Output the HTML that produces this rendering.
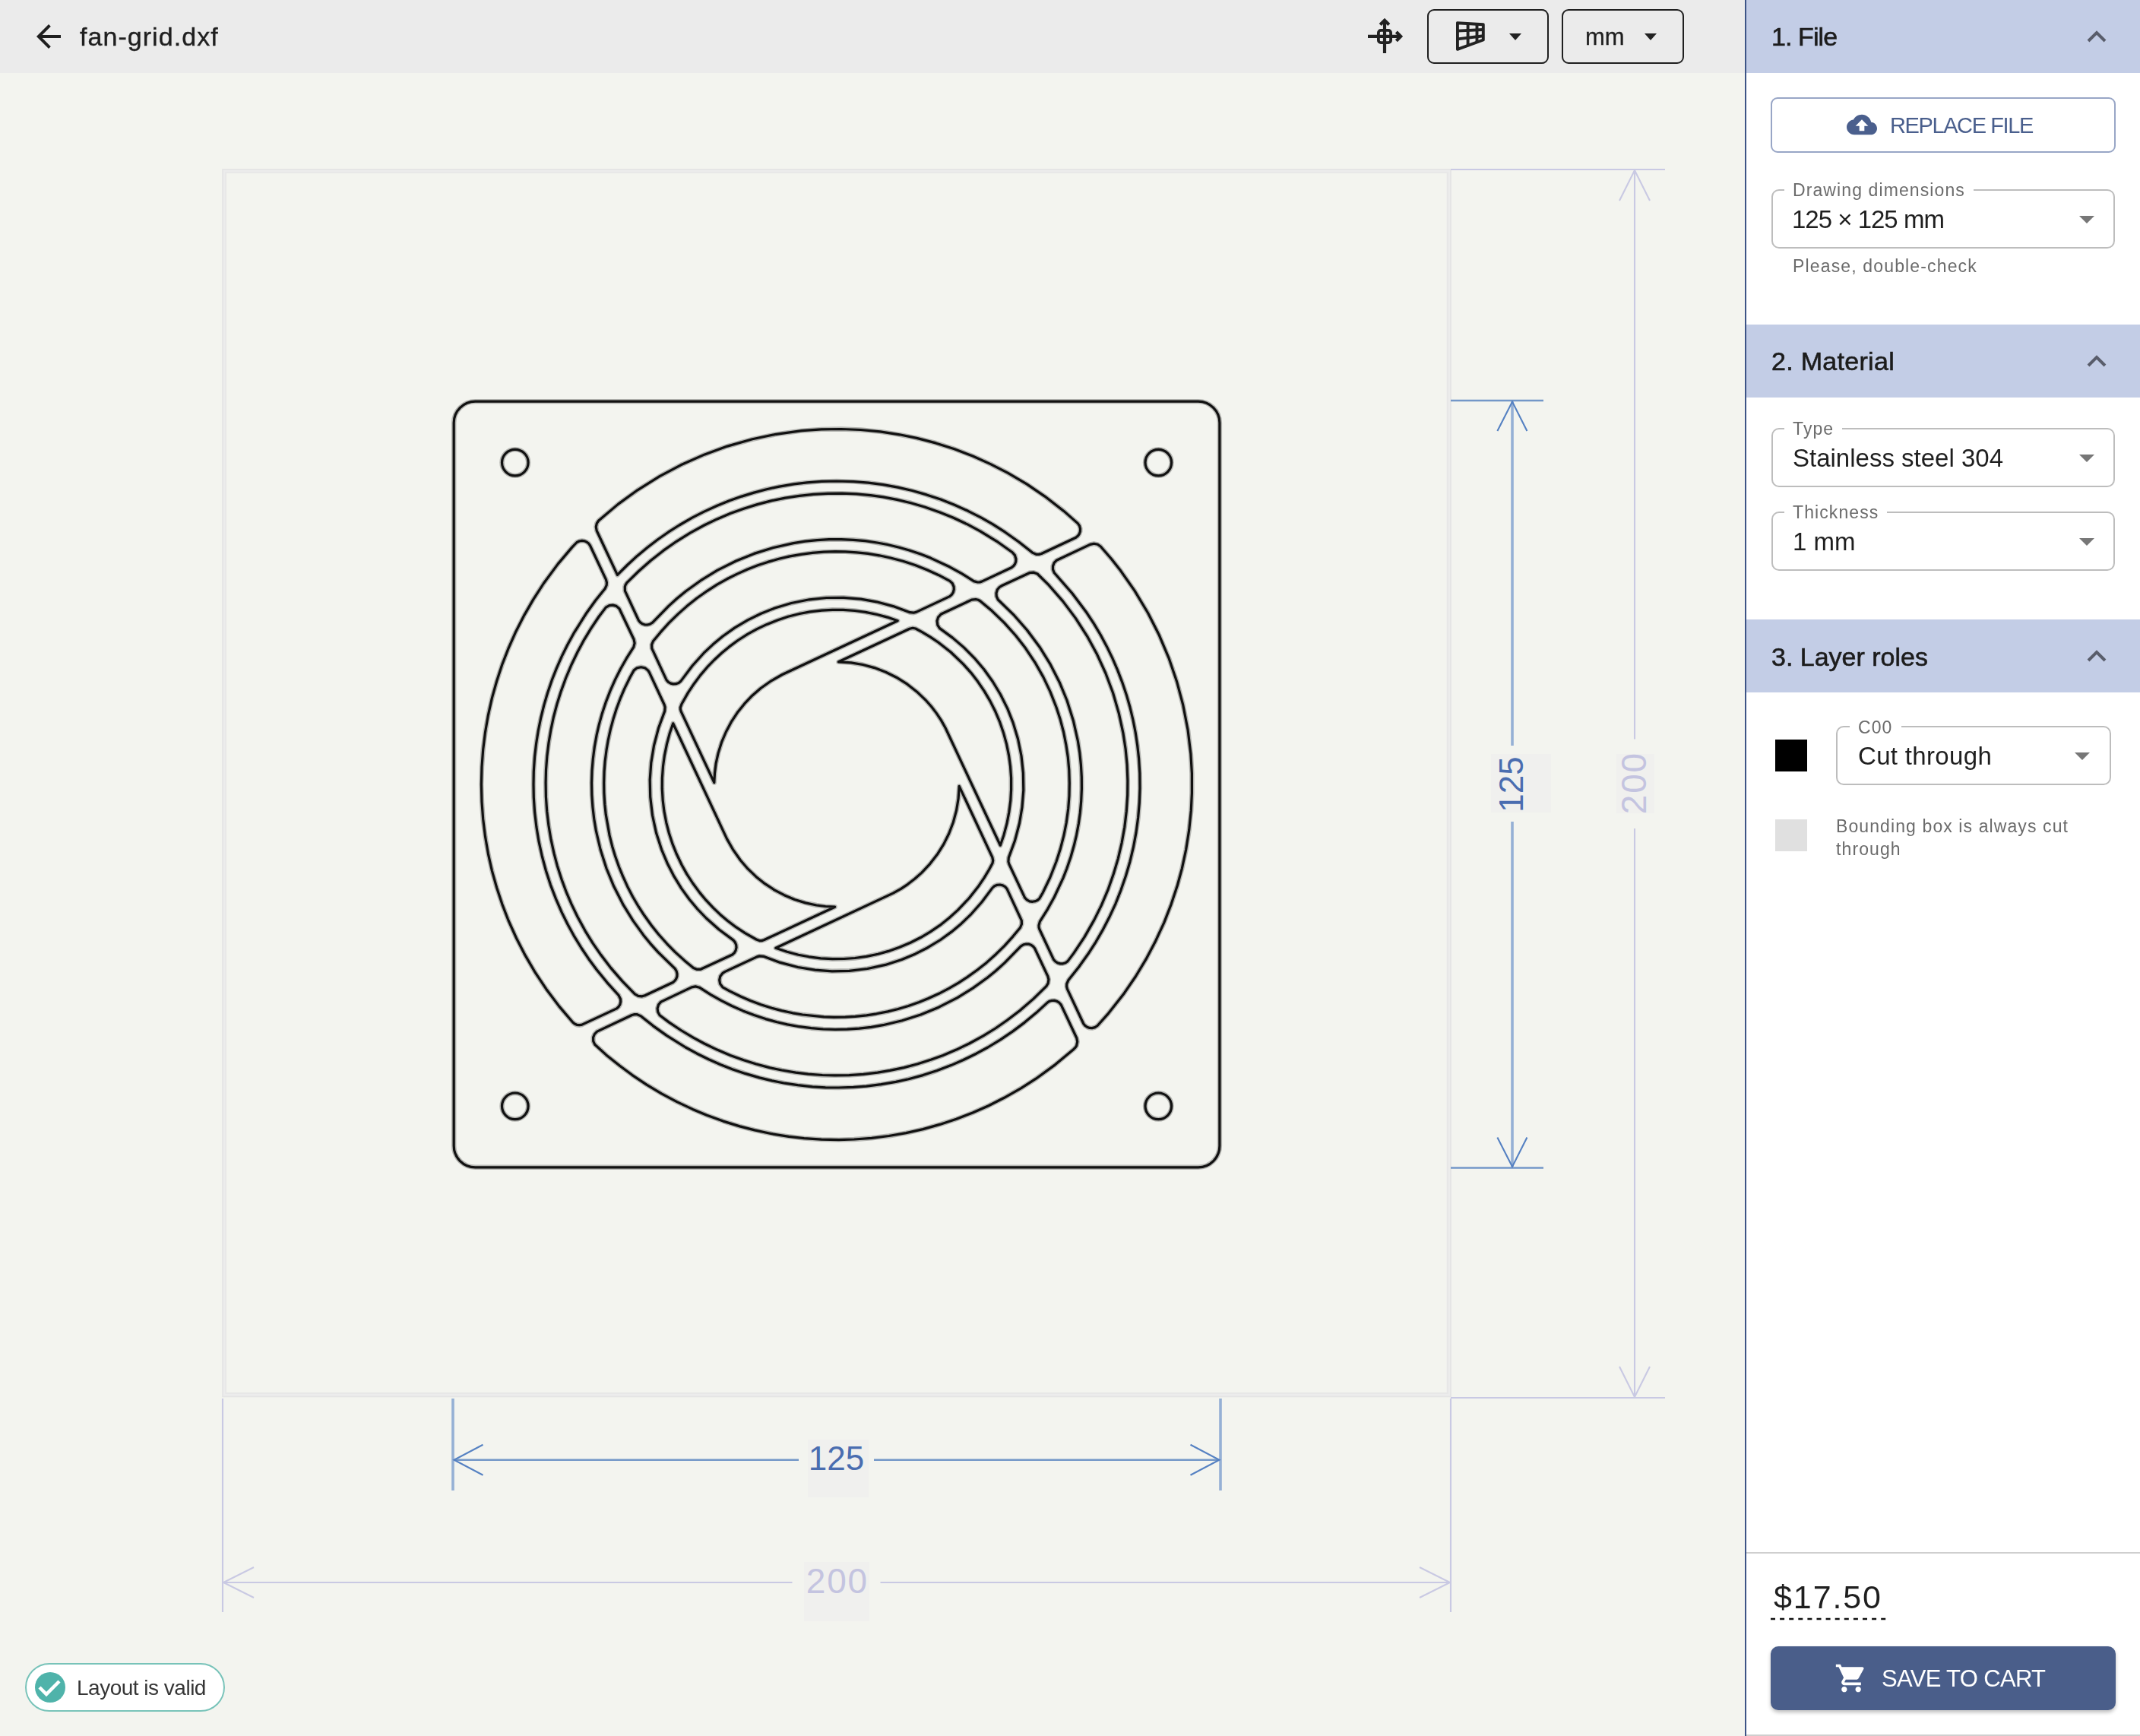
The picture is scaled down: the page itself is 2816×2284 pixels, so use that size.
<!DOCTYPE html>
<html><head><meta charset="utf-8">
<style>
html,body{margin:0;padding:0;width:2816px;height:2284px;overflow:hidden;background:#f3f4ef;font-family:"Liberation Sans",sans-serif;-webkit-font-smoothing:antialiased;}
.t,.val,.lbl,.hdr{will-change:transform;}
.abs{position:absolute;}
#topbar{left:0;top:0;width:2296px;height:96px;background:#ebebeb;}
#side{left:2298px;top:0;width:518px;height:2284px;background:#fff;}
#sideline{left:2296px;top:0;width:2px;height:2284px;background:#3d5486;}
.t{position:absolute;white-space:nowrap;line-height:1;}
.band{position:absolute;left:2298px;width:518px;height:96px;background:#c3cde6;}
.hdr{position:absolute;left:2331px;font-size:34px;color:#1c1c1c;-webkit-text-stroke:0.6px #1c1c1c;}
.chev{position:absolute;left:2744px;}
.field{position:absolute;border:2px solid #bdbdbd;border-radius:10px;box-sizing:border-box;}
.lbl{position:absolute;background:#fff;padding:0 11px;font-size:23px;letter-spacing:1.1px;color:#6b6b6b;line-height:1;}
.val{position:absolute;font-size:33px;color:#1f1f1f;line-height:1;}
.tri{position:absolute;width:0;height:0;border-left:10px solid transparent;border-right:10px solid transparent;border-top:10px solid #777;}
</style></head><body>
<div id="topbar" class="abs"></div>
<svg class="abs" style="left:0;top:0" width="2296" height="2284" viewBox="0 0 2296 2284">
  <!-- 200 box -->
  <rect x="295" y="225" width="1611.5" height="1610" fill="none" stroke="#ececec" stroke-width="6"/>
  <rect x="293" y="223" width="1616" height="1614.5" fill="none" stroke="#e4e4e4" stroke-width="1.6"/>
  <rect x="297" y="227" width="1608" height="1606" fill="none" stroke="#e6e6e6" stroke-width="1.6"/>
  <!-- fan drawing -->
  <defs><g id="fan">
    <rect x="597.2" y="528.1" width="1007.7" height="1007.7" rx="28.2" ry="28.2"/>
    <circle cx="677.8" cy="608.6" r="17.3"/>
    <circle cx="1524.3" cy="608.6" r="17.3"/>
    <circle cx="677.8" cy="1455.3" r="17.3"/>
    <circle cx="1524.3" cy="1455.3" r="17.3"/>
    <path d="M782.7 1374.2L780.7 1369.9L780.6 1364.8L782.4 1360.5L785.7 1357.1L831.6 1335.5L835 1334.6L838.5 1334.7L843.5 1336.9L859.3 1349.6L877.2 1362.4L902.2 1378L917.2 1386.2L932.6 1393.8L948.3 1400.7L964.2 1406.9L980.5 1412.4L999.3 1417.9L1015.9 1421.9L1032.7 1425.2L1049.7 1427.7L1069.2 1429.8L1086.3 1430.8L1103.4 1431L1123 1430.4L1140.1 1429.1L1159.5 1426.7L1178.8 1423.4L1195.5 1419.7L1214.5 1414.6L1233.1 1408.6L1251.4 1401.6L1267.1 1394.8L1284.7 1386.2L1299.8 1378L1316.5 1367.8L1332.7 1356.9L1348.4 1345.1L1363.5 1332.6L1378.5 1318.9L1381.2 1317.2L1383.9 1316.5L1387.4 1316.4L1390.8 1317.3L1393.8 1319.2L1396.2 1321.9L1416.8 1365.8L1417.7 1370.5L1416.6 1375.8L1415.1 1378.1L1412.8 1380.4L1388.7 1400.6L1363.2 1419.2L1343.8 1431.6L1321.4 1444.3L1300.9 1454.7L1279.9 1464L1258.5 1472.3L1236.7 1479.4L1214.6 1485.6L1192.3 1490.6L1169.6 1494.5L1146.9 1497.3L1124 1499L1103.8 1499.6L1080.9 1499.1L1058.1 1497.6L1038 1495.3L1015.5 1491.7L993 1486.9L973.5 1481.9L951.6 1475.1L930.1 1467.2L911.5 1459.4L890.7 1449.6L870.5 1438.8L850.9 1427.1L831.8 1414.3L815.6 1402.3L797.7 1387.9ZM1074.4 1191L1086.2 1192.5L1098.6 1193.2L1005.1 1236.8L1002.4 1237.6L999.9 1237.7L995.2 1236L980.4 1227.6L968.7 1219.9L957.5 1211.4L947.7 1203.2L938.5 1194.4L928.9 1184.2L920.7 1174.4L911.6 1162L903.9 1150.1L897 1137.8L890.4 1123.8L885.1 1110.7L880.3 1096L876.8 1082.3L873.9 1067.1L872.2 1053.1L871.3 1037.7L871.4 1023.5L872.5 1008.1L874.4 994.1L877.5 978.9L881.1 965.3L885.7 951.8L956.5 1103.6L964.8 1118.2L974.5 1132L984.2 1143.2L994.9 1153.4L1006.5 1162.7L1018.9 1170.8L1032 1177.7L1045.7 1183.5L1059.9 1187.9ZM834.2 881.9L838.3 878.8L843.6 877.7L848.6 878.8L852.7 882L854.4 884.6L874.1 927L875.1 930.4L874.7 935.6L866.6 957.7L860.5 981L856.8 1003.4L855.2 1025.9L855.7 1048.5L858.5 1072.5L863.6 1096.1L870.5 1117.6L878.1 1135.7L886.3 1151.8L896.5 1168.6L907.1 1183.2L917.8 1196L929.3 1208L946.2 1223L964.9 1236.9L967.2 1239.6L968.7 1243.2L969 1246.7L968.1 1250.5L966.3 1253.6L963.7 1256L921.9 1275.3L916.8 1275.3L912.5 1273.5L900.9 1263.9L888.4 1252.6L877.8 1241.8L866.6 1229.3L857.2 1217.5L847.4 1203.8L840.2 1192.7L832.6 1179.7L825.7 1166.4L819.5 1152.7L814.5 1140.5L809.5 1126.3L805.7 1113.7L802.1 1099.1L797.2 1071.4L795.8 1058.2L794.9 1043.3L794.7 1030.1L795.1 1015.1L796.1 1001.9L798 987.1L800.2 974L803.4 959.4L807.3 944.9L811.3 932.3L816.5 918.3L821.7 906.1L829.1 891ZM797.3 799.1L801.8 796.6L806.4 796.1L811 797.4L814.9 800.7L834.1 841.2L835.1 846.2L833.8 851.3L824.4 866.2L816.6 880L809.5 894.1L803.1 908.6L797.4 923.3L792.4 938.4L788.2 953.6L785.1 967.1L782.3 982.7L780.3 998.4L779 1014.2L778.5 1030L778.8 1045.8L779.9 1061.6L781.7 1077.3L784.3 1092.9L790.2 1118L798 1142.5L807.8 1166.3L820.4 1190.9L832.9 1211.1L846.8 1230.4L855.5 1241.1L866.1 1252.9L888.2 1274.4L890.2 1277.8L891 1281.3L890.9 1284.4L889.8 1287.8L887.9 1290.4L885.5 1292.5L848.6 1309.8L844.4 1310.9L839.8 1310.3L835.4 1307.8L818.9 1290.9L803.5 1273.1L790.7 1256.3L780 1240.8L770.1 1224.8L760 1206.3L751.9 1189.4L745.4 1174.2L738.9 1156.6L733.2 1138.7L729 1122.7L725 1104.4L721.9 1085.8L719.7 1067.2L718.4 1048.4L718.1 1029.7L718.5 1013.2L719.9 994.5L721.9 978.1L725 959.6L728.4 943.5L733.2 925.4L738.2 909.6L744.6 892L751.9 874.7L760 857.8L767.8 843.2L777.5 827.1L787.9 811.5ZM765.3 1348.4L762.2 1348.7L759 1348.3L756.2 1347L753.7 1345L735.9 1324.1L718.7 1301.2L704.4 1279.7L691.4 1257.4L679.6 1234.5L669 1211L660.8 1189.6L653.6 1167.8L647.4 1145.6L642.4 1123.3L638.5 1100.6L635.7 1077.9L634 1055L633.4 1032L634 1009L635.7 986.1L638.5 963.4L642.4 940.8L647.4 918.4L653.6 896.3L660.7 874.5L669 853.1L678.3 832.1L690 809.1L701.5 789.1L715.4 767.5L734.1 742.1L752.7 720.1L759.1 713.5L762.3 712L765.8 711.4L769.3 711.9L772.2 713.2L774.6 715.1L776.5 717.7L797.5 762.6L798.4 766.4L798.2 769.9L796.1 774.5L783.4 790.3L772 806.2L755 833.2L746.8 848.2L739.2 863.6L732.3 879.3L726.1 895.2L720.6 911.5L715.8 927.9L711.7 944.5L708.3 961.3L705.6 978.3L703.6 995.3L702.3 1014.8L702 1032L702.3 1049.1L703.6 1068.6L705.9 1088.1L709.1 1107.4L713.3 1126.5L718.4 1145.5L724.4 1164.1L731.4 1182.4L739.2 1200.4L746.8 1215.7L755 1230.8L765.2 1247.5L774.7 1261.7L784.9 1275.5L798.8 1292.6L814.1 1309.5L816.5 1314.5L816.7 1318L815.9 1321.5L814.1 1324.5L811.5 1326.9ZM942.1 1004.4L940.5 1017.2L939.8 1029.6L896.2 936.1L895.4 933.4L895.3 930.9L897 926.2L905.4 911.4L913.2 899.7L921.6 888.4L930.7 877.7L939.6 868.5L949.8 859L959.6 850.9L971 842.5L984.1 834.2L996.5 827.4L1009.2 821.4L1023.6 815.7L1037 811.3L1052 807.5L1065.9 804.9L1081.3 803.1L1095.4 802.3L1109.5 802.4L1124.9 803.5L1138.9 805.4L1154.1 808.5L1167.7 812.1L1181.2 816.7L1029.4 887.5L1014.8 895.8L1001 905.5L989.8 915.2L979.6 925.9L970.3 937.5L962.2 949.9L955.3 963L949.5 976.7L945.1 990.9ZM857.8 853.2L857.6 848.2L859.5 843.5L869.1 831.9L880.4 819.4L892.5 807.6L903.8 797.6L917 787L930.8 777.3L943.5 769.2L956.6 761.8L970 755.1L983.7 749L997.8 743.6L1010.3 739.4L1024.8 735.3L1039.4 731.9L1054.2 729.3L1069.1 727.3L1084.1 726.1L1099.1 725.7L1112.3 725.9L1127.3 726.8L1142.2 728.4L1157 730.8L1171.8 734L1188.2 738.3L1204.2 743.6L1219.9 749.7L1235.3 756.7L1249.8 764.3L1253.2 767.5L1255.1 771.9L1255.3 775.4L1254.3 779.3L1252.4 782.3L1249.8 784.6L1206 805.1L1202.2 806.2L1197.4 805.7L1175.3 797.6L1153.4 791.8L1132.6 788.2L1110.1 786.3L1087.5 786.5L1065 788.8L1041.3 793.5L1019.6 800L1001.4 807.2L983.8 815.9L966.9 825.9L950.9 837.2L938.2 847.8L926.1 859.2L911 876L896.1 895.9L893.1 898.4L889.4 899.7L885.9 899.9L882.5 899.1L879.4 897.3L877 894.7ZM822.4 777.4L822.3 771.9L823.2 769.3L824.9 766.7L840.4 751.5L856.3 737.5L872.9 724.4L890.2 712.3L908.2 701.1L926.7 691L943.6 682.9L961 675.6L978.6 669.2L996.6 663.6L1014.8 658.9L1033.2 655.1L1051.8 652.3L1070.5 650.3L1089.2 649.3L1108 649.1L1126.8 649.9L1145.5 651.7L1161.9 653.9L1180.3 657.4L1198.6 661.7L1216.7 667L1236.6 673.9L1254.1 681L1273.1 689.9L1289.8 698.8L1311.8 712.3L1332.2 726.7L1335.5 730.6L1336.9 735.5L1336.7 739L1335.6 742L1333.8 744.5L1331 746.8L1291.8 765.1L1289.2 765.9L1286.4 766L1281.4 764.6L1265.1 754.4L1249.5 745.8L1224.4 734.1L1211.5 729.1L1196.5 724L1183.2 720.2L1167.8 716.5L1154.2 714L1138.5 711.7L1122.8 710.3L1107 709.6L1091.1 709.7L1075.3 710.6L1059.6 712.2L1044 714.6L1016.9 720.7L992.4 728.4L968.6 738L943.8 750.4L923.5 762.8L902.6 777.8L890.4 787.8L880.1 797.1L858.6 819.2L855.2 821.2L851.7 822L848.2 821.8L845.2 820.8L842.6 818.9L840.5 816.5ZM868.1 1335.7L865.6 1331.2L865.1 1326.6L866.6 1321.7L869.7 1318.1L910.2 1298.9L915.2 1297.9L920.3 1299.2L935.2 1308.6L949 1316.4L963.1 1323.5L977.6 1329.9L992.3 1335.6L1007.4 1340.6L1022.6 1344.8L1036.1 1347.9L1051.7 1350.7L1067.4 1352.7L1083.2 1354L1099 1354.5L1114.8 1354.2L1130.6 1353.1L1146.3 1351.3L1161.9 1348.7L1187 1342.8L1211.5 1335L1235.3 1325.2L1259.9 1312.6L1280.1 1300.1L1299.4 1286.2L1310.1 1277.5L1321.9 1266.9L1343.4 1244.8L1346.8 1242.8L1350.3 1242L1353.4 1242.1L1356.8 1243.2L1359.4 1245.1L1361.5 1247.5L1378.8 1284.4L1379.9 1288.6L1379.2 1293.6L1376.8 1297.6L1359.9 1314.1L1342.1 1329.5L1325.3 1342.3L1309.9 1353L1293.8 1362.9L1275.3 1373L1258.4 1381.1L1241 1388.4L1225.5 1394.1L1207.6 1399.8L1189.4 1404.6L1171.1 1408.4L1154.8 1411.1L1136.2 1413.3L1117.4 1414.6L1098.7 1414.9L1082.2 1414.5L1063.5 1413.1L1047.1 1411.1L1028.6 1408L1012.5 1404.6L994.4 1399.8L978.6 1394.8L961 1388.4L943.6 1381.1L926.8 1373L912.2 1365.2L896.1 1355.5L880.5 1345.1ZM950.9 1298.8L947.6 1294.4L946.7 1289.4L947.8 1284.4L951 1280.3L953.6 1278.6L996 1258.9L999.4 1257.9L1004.6 1258.3L1026.7 1266.4L1050 1272.5L1072.4 1276.2L1094.9 1277.8L1117.5 1277.3L1141.5 1274.5L1165.1 1269.4L1186.6 1262.5L1204.7 1254.9L1220.8 1246.7L1237.6 1236.5L1252.2 1225.9L1265 1215.2L1277 1203.7L1292 1186.8L1305.9 1168.1L1308.6 1165.8L1312.2 1164.3L1315.7 1164L1319.5 1164.9L1322.6 1166.7L1325 1169.3L1344.3 1211.1L1344.4 1215.8L1342.5 1220.5L1332.9 1232.1L1321.6 1244.6L1310.8 1255.2L1298.3 1266.4L1286.5 1275.8L1272.8 1285.6L1261.7 1292.8L1248.7 1300.4L1235.4 1307.3L1221.7 1313.5L1209.5 1318.5L1195.3 1323.5L1180.9 1327.7L1168.1 1330.9L1153.4 1333.8L1140.3 1335.8L1125.4 1337.4L1112.2 1338.1L1097.3 1338.3L1084.1 1337.9L1056.1 1335L1043 1332.8L1028.4 1329.6L1015.6 1326.2L1001.3 1321.7L987.3 1316.5L975.1 1311.3L960 1303.9ZM1035.7 1252.3L1020.8 1247.3L1175.2 1175.1L1185.6 1169.3L1194.6 1163.3L1204 1156L1212.9 1148.1L1223.7 1136.6L1233.4 1124.1L1241.8 1110.6L1248.8 1096.5L1254.4 1081.7L1258.5 1066.4L1261.1 1050.8L1262.2 1034.4L1305.8 1127.9L1306.7 1132.1L1306 1135.8L1301.6 1144L1295.1 1154.9L1288 1165.4L1275 1182L1260.4 1197.4L1248.9 1207.8L1236.8 1217.4L1223.9 1226.1L1211.8 1233.3L1198 1240.3L1183.7 1246.3L1169.1 1251.4L1155.4 1255.2L1140.3 1258.4L1125 1260.5L1110.8 1261.5L1095.3 1261.7L1079.9 1260.8L1064.5 1258.8L1050.6 1256.2ZM1387.2 753.5L1385.5 749.1L1385.5 744.8L1387.2 740.4L1390.2 737.3L1434.5 716.4L1439.5 715.3L1444.4 716.3L1448.3 719L1462.4 735.3L1474.8 751.1L1493 777.1L1510.6 806.5L1524.9 834.7L1538.3 866.4L1548.4 896.2L1556.6 926.8L1563.1 960.5L1566.9 991.9L1568.4 1017.7L1568.4 1043.4L1567.3 1066.4L1564.7 1092.1L1560.7 1117.6L1555.3 1142.8L1549.3 1165L1541.2 1189.6L1531.9 1213.6L1519.9 1239.6L1507.8 1262.4L1494.5 1284.5L1478.2 1308.3L1458.7 1333.1L1444.1 1349.5L1440.8 1351.6L1437 1352.6L1433.8 1352.4L1430.5 1351.2L1427.9 1349.4L1425.7 1346.7L1404.5 1301.4L1403.6 1298L1403.7 1294.5L1405.9 1289.5L1420 1271.7L1432.8 1253.7L1442 1239.3L1450.6 1224.4L1459.6 1207.1L1467.8 1189.3L1475 1171.1L1481.4 1152.5L1486.9 1133.7L1491.4 1114.7L1495 1095.4L1497.6 1076L1499.3 1056.5L1500 1036.9L1499.8 1017.3L1498.6 997.8L1496.7 980.8L1494.2 963.8L1490.9 947L1486.9 930.3L1482.2 913.9L1476.7 897.6L1470.6 881.6L1463.8 865.9L1456.3 850.4L1448.2 835.3L1439.5 820.6L1430.1 806.3L1411 780.8ZM1313.3 789L1311.3 784.7L1311 780.4L1312.4 775.8L1315.2 772.5L1317.9 770.8L1355.2 753.5L1360.3 753.2L1365.1 755L1380 769.7L1398.5 790.9L1415.4 813.4L1430.6 837.1L1443.1 859.9L1454.8 885.5L1464.6 911.8L1472.4 938.9L1477.9 964.3L1481.1 985.2L1483.1 1006.1L1483.9 1027.3L1483.7 1046.1L1482.3 1067.2L1479.8 1088.2L1476.1 1109L1471.3 1129.6L1465.3 1149.8L1458.3 1169.8L1449.2 1191.4L1439.8 1210.4L1427 1232.9L1412.7 1254.4L1405 1264.6L1402.1 1266.7L1398.7 1267.8L1395.2 1267.9L1391.7 1266.9L1388.8 1265L1386.4 1262.4L1367.9 1222.8L1367.1 1220.2L1367 1217.4L1368.4 1212.4L1378.6 1196.1L1387.2 1180.5L1398.9 1155.4L1403.9 1142.5L1409 1127.5L1413.3 1112.3L1416.5 1098.8L1419.4 1083.3L1421.3 1069.5L1422.7 1053.8L1423.4 1038L1423.3 1022.1L1422.4 1006.3L1420.8 990.6L1418.4 975L1412.3 947.9L1404 921.5L1394.2 897.7L1381.6 873.1L1368 851.2L1351.5 829L1334.6 809.7ZM1236.5 826.6L1233.8 822.3L1233.1 816.9L1234.6 812.1L1238.3 808L1278.6 789.1L1284 788.5L1287.1 789.3L1289.5 790.5L1305.4 803.8L1321.5 819.4L1336.6 836.2L1349.3 852.6L1361.8 871.3L1372.9 890.9L1381.8 909.6L1390 930.5L1395.2 946.6L1399.5 963L1402.8 979.6L1405.3 996.3L1406.8 1013.2L1407.3 1030.1L1407 1047L1405.7 1063.9L1403.2 1082.5L1399.9 1099.2L1395.2 1117.3L1390 1133.5L1381.8 1154.5L1372.1 1174.7L1367.8 1182.1L1365.5 1184.2L1362.6 1185.6L1358.7 1186.3L1354.8 1185.8L1351.3 1183.9L1348.6 1181.1L1327.9 1137L1326.9 1133.6L1327.3 1128.4L1335.4 1106.3L1341.5 1083L1345 1062.1L1346.8 1039.6L1346.4 1017L1344 994.5L1339.5 972.3L1333 950.6L1325.8 932.4L1316.4 913.5L1306.3 896.7L1294.9 880.8L1282.2 865.8L1268.4 851.9L1253.5 839.1ZM1320.9 1098.7L1316.3 1112.2L1244.1 957.8L1238.3 947.4L1232.3 938.4L1225.7 929.7L1217.8 920.8L1206.3 909.9L1193.9 900.2L1179.6 891.2L1165.5 884.2L1150.7 878.6L1135.4 874.5L1119.8 871.9L1103.4 870.8L1196.9 827.2L1201.1 826.3L1204.8 827L1213 831.4L1223.9 837.9L1234.5 845L1251.1 858L1267.4 873.6L1277.7 885.1L1286.4 896.3L1295.1 909.1L1302.9 922.4L1309.9 936.3L1315.4 949.3L1320.4 963.9L1324.5 978.9L1327.6 994.1L1329.5 1008.1L1330.6 1023.5L1330.6 1039L1329.8 1053.1L1327.8 1068.5L1324.9 1083.7ZM812.4 756.4L785.2 698.2L784.3 693.2L785.3 688.6L787.7 685L813.3 663.4L838.9 644.8L868 626.6L895.9 611.8L927.3 597.9L957.1 587.1L990.1 577.8L1021.1 571.3L1055.1 566.7L1080.9 564.9L1106.7 564.5L1132.5 565.5L1158.2 567.9L1183.7 571.8L1206.3 576.4L1231.3 582.9L1255.9 590.8L1280 600L1303.5 610.6L1326.5 622.4L1351.1 636.9L1374.9 653.1L1399.9 672.4L1418.3 688.6L1420.5 691.8L1421.5 695.6L1421.4 699.2L1420.2 702.5L1418.4 705.1L1415.7 707.3L1370.4 728.5L1367 729.4L1363.5 729.3L1358.5 727.1L1340.7 713L1322.7 700.2L1306.2 689.7L1291.3 681.2L1273.9 672.3L1256 664.3L1237.8 657.1L1219.2 650.9L1200.4 645.5L1181.3 641.1L1162 637.6L1142.6 635.1L1123.1 633.6L1101 633L1081.5 633.4L1061.9 634.9L1044.9 636.9L1025.6 640.1L1008.8 643.7L992.2 648.1L975.9 653.1L959.7 658.8L943.8 665.2L926 673.4L910.8 681.2L893.8 691L879.3 700.2L865.3 710L851.7 720.4L838.5 731.4L825.9 743Z"/>
  </g></defs>
  <use href="#fan" fill="none" stroke="#111" stroke-width="6.4" stroke-opacity="0.28" stroke-linejoin="round"/>
  <use href="#fan" fill="none" stroke="#111" stroke-width="3.2" stroke-linejoin="round"/>
  <!-- dims 200 (light) -->
  <g stroke="#c9c9e3" stroke-width="2.1" fill="none">
    <line x1="1909" y1="223" x2="2191" y2="223"/>
    <line x1="1909" y1="1839" x2="2191" y2="1839"/>
    <line x1="2151" y1="224" x2="2151" y2="972.5"/>
    <line x1="2151" y1="1090" x2="2151" y2="1838"/>
    <polyline points="2131,264 2151,224 2171,264"/>
    <polyline points="2131,1798 2151,1838 2171,1798"/>
    <line x1="293" y1="1840" x2="293" y2="2121"/>
    <line x1="1909" y1="1840" x2="1909" y2="2121"/>
    <line x1="293" y1="2082" x2="1042.5" y2="2082"/>
    <line x1="1158.5" y1="2082" x2="1909" y2="2082"/>
    <polyline points="334,2062 294,2082 334,2102"/>
    <polyline points="1868,2062 1908,2082 1868,2102"/>
  </g>
  <rect x="2127" y="992" width="50" height="78" fill="#f0f0ee"/>
  <rect x="1058" y="2055" width="86" height="78" fill="#f0f0ee"/>
  <text x="0.8" y="0" transform="translate(2166,1031) rotate(-90)" text-anchor="middle" font-family="Liberation Sans" font-size="46" letter-spacing="1.7" fill="#c4c4e0">200</text>
  <text x="1101.8" y="2096" text-anchor="middle" font-family="Liberation Sans" font-size="46" letter-spacing="1.7" fill="#c4c4e0">200</text>
  <!-- dims 125 (blue) -->
  <g stroke="#7397c8" stroke-width="2.5" fill="none">
    <line x1="1909" y1="527" x2="2031" y2="527"/>
    <line x1="1909" y1="1536.5" x2="2031" y2="1536.5"/>
    <line x1="597" y1="1920.7" x2="1051" y2="1920.7"/>
    <line x1="1150" y1="1920.7" x2="1605" y2="1920.7"/>
  </g>
  <g stroke="#95b0d5" stroke-width="3.6" fill="none">
    <line x1="1990" y1="528" x2="1990" y2="981"/>
    <line x1="1990" y1="1081" x2="1990" y2="1535"/>
    <line x1="596" y1="1840" x2="596" y2="1961"/>
    <line x1="1606" y1="1840" x2="1606" y2="1961"/>
  </g>
  <g stroke="#5581c2" stroke-width="2.1" fill="none">
    <polyline points="1970.4,567 1990,528.5 2009.4,567"/>
    <polyline points="1970.4,1496.5 1990,1535 2009.4,1496.5"/>
    <polyline points="635.5,1900.7 597.5,1920.7 635.5,1940.7"/>
    <polyline points="1566.5,1900.7 1604.5,1920.7 1566.5,1940.7"/>
  </g>
  <rect x="1962" y="992" width="79" height="77" fill="#f0f0ee"/>
  <rect x="1063" y="1894" width="80" height="76" fill="#f0f0ee"/>
  <text x="0" y="0" transform="translate(2004,1032) rotate(-90)" text-anchor="middle" font-family="Liberation Sans" font-size="44" fill="#4a6db0">125</text>
  <text x="1100.5" y="1934" text-anchor="middle" font-family="Liberation Sans" font-size="44" fill="#4a6db0">125</text>
</svg>

<!-- top bar content -->
<svg class="abs" style="left:40px;top:24px" width="48" height="48" viewBox="0 0 24 24"><path fill="#1f1f1f" d="M20 11H7.83l5.59-5.59L12 4l-8 8 8 8 1.41-1.41L7.83 13H20v-2z"/></svg>
<div class="t" style="left:105px;top:31px;font-size:34px;letter-spacing:1.05px;color:#1f1f1f;-webkit-text-stroke:0.4px #1f1f1f;">fan-grid.dxf</div>

<svg class="abs" style="left:1800px;top:24px" width="46" height="46" viewBox="0 0 46 46">
  <g fill="none" stroke="#222" stroke-width="4.2">
    <path d="M0 23.9 H42"/>
    <path d="M22 3 V46"/>
    <path d="M16.2 8.6 L22 2.8 L27.8 8.6" stroke-linecap="butt"/>
    <path d="M37.4 18.1 L43.2 23.9 L37.4 29.7"/>
    <rect x="13.9" y="15.9" width="16.2" height="16.2" rx="3.2" stroke-width="3.8"/>
  </g>
</svg>
<div class="abs" style="left:1878px;top:12px;width:160px;height:72px;border:2.6px solid #1f1f1f;border-radius:9px;box-sizing:border-box;"></div>
<svg class="abs" style="left:1916px;top:28px" width="39" height="40" viewBox="0 0 39 40">
  <g fill="none" stroke="#222" stroke-width="3.9" stroke-linejoin="round">
    <path d="M1.9 2.3 L35.8 4.3 L35.8 24.5 L1.9 36.8 Z"/>
    <path d="M15.6 3.1 L15.6 31.8 M27.5 3.8 L27.5 27.5"/>
    <path d="M1.9 12.6 L35.8 11 M1.9 23.4 L35.8 19.3"/>
  </g>
</svg>
<div class="tri" style="left:1986px;top:44px;border-left-width:8px;border-right-width:8px;border-top:9px solid #222;"></div>
<div class="abs" style="left:2055px;top:12px;width:161px;height:72px;border:2.6px solid #1f1f1f;border-radius:9px;box-sizing:border-box;"></div>
<div class="t" style="left:2086px;top:33px;font-size:31px;color:#1f1f1f;-webkit-text-stroke:0.3px #1f1f1f;">mm</div>
<div class="tri" style="left:2164px;top:44px;border-left-width:8px;border-right-width:8px;border-top:9px solid #222;"></div>

<!-- sidebar -->
<div id="sideline" class="abs"></div>
<div id="side" class="abs"></div>
<div class="band" style="top:0"></div>
<div class="band" style="top:427px"></div>
<div class="band" style="top:815px"></div>
<div class="hdr t" style="top:31px;letter-spacing:-0.9px;">1. File</div>
<div class="hdr t" style="top:458px;letter-spacing:0.3px;">2. Material</div>
<div class="hdr t" style="top:847px">3. Layer roles</div>
<svg class="chev" style="top:36px" width="30" height="22" viewBox="0 0 30 22"><path d="M4 18 L15 7 L26 18" fill="none" stroke="#595d6b" stroke-width="4"/></svg>
<svg class="chev" style="top:463px" width="30" height="22" viewBox="0 0 30 22"><path d="M4 18 L15 7 L26 18" fill="none" stroke="#595d6b" stroke-width="4"/></svg>
<svg class="chev" style="top:851px" width="30" height="22" viewBox="0 0 30 22"><path d="M4 18 L15 7 L26 18" fill="none" stroke="#595d6b" stroke-width="4"/></svg>

<div class="abs" style="left:2330px;top:128px;width:454px;height:73px;border:2px solid #98a6c6;border-radius:9px;box-sizing:border-box;"></div>
<svg class="abs" style="left:2430px;top:143.7px" width="40" height="40" viewBox="0 0 24 24"><path fill="#4a5f8d" d="M19.35 10.04C18.67 6.59 15.64 4 12 4 9.11 4 6.6 5.64 5.35 8.04 2.34 8.36 0 10.91 0 14c0 3.31 2.69 6 6 6h13c2.76 0 5-2.24 5-5 0-2.64-2.05-4.78-4.65-4.96zM14 13v4h-4v-4H7l5-5 5 5h-3z"/></svg>
<div class="t" style="left:2487px;top:151px;font-size:29px;letter-spacing:-1.4px;color:#4a5f8d;">REPLACE FILE</div>

<div class="field" style="left:2331px;top:249px;width:452px;height:78px;"></div>
<div class="lbl" style="left:2348px;top:239px;">Drawing dimensions</div>
<div class="val" style="left:2358px;top:272px;letter-spacing:-1px;">125 × 125 mm</div>
<div class="tri" style="left:2736px;top:284px;"></div>
<div class="t" style="left:2359px;top:339px;font-size:23px;letter-spacing:1.15px;color:#6b6b6b;">Please, double-check</div>

<div class="field" style="left:2331px;top:563px;width:452px;height:78px;"></div>
<div class="lbl" style="left:2348px;top:553px;">Type</div>
<div class="val" style="left:2359px;top:586px;">Stainless steel 304</div>
<div class="tri" style="left:2736px;top:598px;"></div>

<div class="field" style="left:2331px;top:673px;width:452px;height:78px;"></div>
<div class="lbl" style="left:2348px;top:663px;">Thickness</div>
<div class="val" style="left:2359px;top:696px;">1 mm</div>
<div class="tri" style="left:2736px;top:708px;"></div>

<div class="abs" style="left:2336px;top:973px;width:42px;height:42px;background:#000;"></div>
<div class="field" style="left:2416px;top:955px;width:362px;height:78px;"></div>
<div class="lbl" style="left:2434px;top:946px;">C00</div>
<div class="val" style="left:2445px;top:978px;letter-spacing:0.33px;">Cut through</div>
<div class="tri" style="left:2730px;top:990px;"></div>
<div class="abs" style="left:2336px;top:1078px;width:42px;height:42px;background:#e0e0e0;"></div>
<div class="t" style="left:2416px;top:1072px;font-size:23px;letter-spacing:1.1px;color:#6b6b6b;line-height:30px;">Bounding box is always cut<br>through</div>

<div class="abs" style="left:2298px;top:2042px;width:518px;height:2px;background:#cfcfcf;"></div>
<div class="t" style="left:2334px;top:2080px;font-size:43px;letter-spacing:1.9px;color:#1f1f1f;">$17.50</div>
<svg class="abs" style="left:2330px;top:2127px" width="154" height="6"><line x1="0" y1="3" x2="154" y2="3" stroke="#111" stroke-width="2.4" stroke-dasharray="6 6.1"/></svg>
<div class="abs" style="left:2330px;top:2166px;width:454px;height:84px;background:#4a5e8a;border-radius:10px;box-shadow:0 3px 5px rgba(0,0,0,0.25);"></div>
<svg class="abs" style="left:2414px;top:2186px" width="44" height="44" viewBox="0 0 24 24"><path fill="#fff" d="M7 18c-1.1 0-1.99.9-1.99 2S5.9 22 7 22s2-.9 2-2-.9-2-2-2zM1 2v2h2l3.6 7.59-1.35 2.45c-.16.28-.25.61-.25.96 0 1.1.9 2 2 2h12v-2H7.42c-.14 0-.25-.11-.25-.25l.03-.12.9-1.63h7.45c.75 0 1.41-.41 1.75-1.03l3.58-6.49c.08-.14.12-.31.12-.48 0-.55-.45-1-1-1H5.21l-.94-2H1zm16 16c-1.1 0-1.99.9-1.99 2s.89 2 1.99 2 2-.9 2-2-.9-2-2-2z"/></svg>
<div class="t" style="left:2476px;top:2193px;font-size:31px;letter-spacing:-0.67px;color:#fff;">SAVE TO CART</div>
<div class="abs" style="left:2298px;top:2282px;width:518px;height:2px;background:#cfcfcf;"></div>

<!-- layout valid pill -->
<div class="abs" style="left:32.5px;top:2188px;width:263px;height:64px;border:2.5px solid #78c3b9;border-radius:32px;background:#fff;box-sizing:border-box;"></div>
<svg class="abs" style="left:45px;top:2199px" width="42" height="42" viewBox="0 0 42 42"><circle cx="21" cy="21" r="20" fill="#4fb3aa"/><path d="M7 21 L16 30 L33 13" fill="none" stroke="#fff" stroke-width="4.5"/></svg>
<div class="t" style="left:101px;top:2207px;font-size:28px;letter-spacing:-0.5px;color:#363636;">Layout is valid</div>
</body></html>
